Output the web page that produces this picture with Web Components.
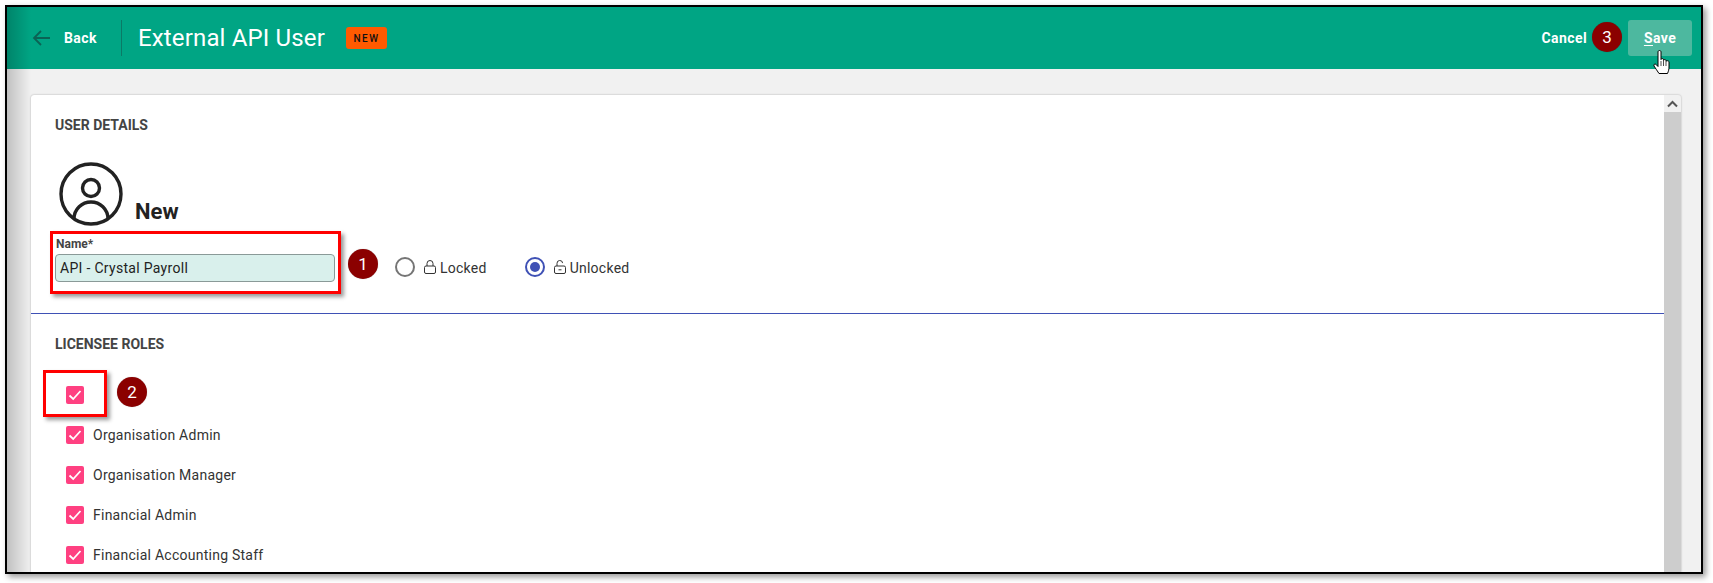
<!DOCTYPE html>
<html lang="en">
<head>
<meta charset="utf-8">
<title>External API User</title>
<style>
html, body { margin: 0; background: #fff; height: 100%; overflow: hidden; }
body { padding: 5px 10px 0 5px; box-sizing: border-box; font-family: Roboto, sans-serif; }
</style>
</head>
<body>
<api-user-page></api-user-page>

<script>
class StepBadge extends HTMLElement {
  constructor() {
    super();
    this.attachShadow({ mode: 'open' }).innerHTML = `
<style>
:host {
  position: absolute;
  width: 30px;
  height: 30px;
  border-radius: 50%;
  background: #8b0000;
  color: #fff;
  font: 400 17px Roboto, sans-serif;
  display: grid;
  place-items: center;
  box-shadow: 0 0 1px #0005;
}
</style><slot></slot>`;
  }
}
customElements.define('step-badge', StepBadge);

class MarkBox extends HTMLElement {
  constructor() {
    super();
    this.attachShadow({ mode: 'open' }).innerHTML = `
<style>
:host {
  position: absolute;
  box-sizing: border-box;
  border: 3px solid #f00;
  box-shadow: 3px 3px 4px #0006;
  pointer-events: none;
}
</style>`;
  }
}
customElements.define('mark-box', MarkBox);

class HeaderBar extends HTMLElement {
  constructor() {
    super();
    this.attachShadow({ mode: 'open' }).innerHTML = `
<style>
:host {
  display: flex;
  align-items: center;
  height: 62px;
  flex: none;
  background: #00a584;
  color: #fff;
  padding-left: 25px;
  padding-right: 9px;
  box-sizing: border-box;
}
.back { display: flex; align-items: center; gap: 14px; font-weight: 700; font-size: 14px; letter-spacing: 0.4px; width: 89px; flex: none; }
svg { display: block; }
.sep { width: 1px; height: 36px; background: #0b7a66; margin-right: 16px; }
h1 { margin: 0; font-size: 24px; font-weight: 400; line-height: 1; letter-spacing: 0.15px; }
.tag {
  margin-left: 21px;
  width: 41px;
  height: 22px;
  border-radius: 3px;
  background: #ff5a00;
  color: #111;
  font-size: 10px;
  font-weight: 500;
  letter-spacing: 1.5px;
  display: grid;
  place-items: center;
}
.actions { margin-left: auto; display: flex; align-items: center; font-weight: 700; font-size: 14px; letter-spacing: 0.4px; }
.cancel { margin-right: 41px; }
.save {
  width: 64px;
  height: 36px;
  border-radius: 3px;
  background: #4db89f;
  display: grid;
  place-items: center;
}
u { text-underline-offset: 2px; }
</style>
<div class="back">
  <svg width="18" height="16" viewBox="0 0 18 16" fill="none" stroke="#0b6355" stroke-width="1.8">
    <path d="M18 8H2M9 1 2 8l7 7"/>
  </svg>
  <span>Back</span>
</div>
<div class="sep"></div>
<h1>External API User</h1>
<span class="tag">NEW</span>
<div class="actions">
  <span class="cancel">Cancel</span>
  <span class="save"><span><u>S</u>ave</span></span>
</div>`;
  }
}
customElements.define('header-bar', HeaderBar);

class RoleCheck extends HTMLElement {
  constructor() {
    super();
    this.attachShadow({ mode: 'open' }).innerHTML = `
<style>
:host {
  display: flex;
  align-items: center;
  gap: 9px;
  height: 18px;
  color: #333;
  font-size: 14px;
  letter-spacing: 0.25px;
}
.box {
  width: 18px;
  height: 18px;
  border-radius: 2px;
  background: #ff4081;
  flex: none;
}
svg { display: block; }
</style>
<span class="box">
  <svg width="18" height="18" viewBox="0 0 18 18" fill="none" stroke="#fff" stroke-width="1.8">
    <path d="M3.500 9.500 7.200 13l7.300-8"/>
  </svg>
</span>
<slot></slot>`;
  }
}
customElements.define('role-check', RoleCheck);

class LockRadio extends HTMLElement {
  constructor() {
    super();
    const on = this.hasAttribute('checked');
    const shackle = on ? 'M3 6V3.500a2.800 2.800 0 0 1 5.600-.4' : 'M3 6V3.500a3 3 0 0 1 6 0V6';
    this.attachShadow({ mode: 'open' }).innerHTML = `
<style>
:host { display: flex; align-items: center; color: #333; font-size: 14px; letter-spacing: 0.25px; }
.dot {
  width: 20px;
  height: 20px;
  box-sizing: border-box;
  border-radius: 50%;
  border: 2px solid ${on ? '#3f51b5' : '#757575'};
  display: grid;
  place-items: center;
  margin-right: 9px;
}
.dot i { width: 10px; height: 10px; border-radius: 50%; background: #3f51b5; display: ${on ? 'block' : 'none'}; }
svg { display: block; margin-right: 4px; }
.text { padding-top: 2px; }
</style>
<span class="dot"><i></i></span>
<svg width="12" height="14" viewBox="0 0 12 14" fill="none" stroke="#333" stroke-width="1">
  <path d="${shackle}"/>
  <rect x="0.5" y="6" width="11" height="7.500" rx="1.500"/>
  ${on ? '<path d="M4.500 9.800h3"/>' : ''}
</svg>
<span class="text"><slot></slot></span>`;
  }
}
customElements.define('lock-radio', LockRadio);

class DetailsCard extends HTMLElement {
  constructor() {
    super();
    this.attachShadow({ mode: 'open' }).innerHTML = `
<style>
:host {
  display: flex;
  flex: 1;
  min-height: 0;
  background: #fff;
  border-radius: 3px 3px 0 0;
  box-shadow: 0 0 2px #0005;
  margin: 26px 20px 0 24px;
  overflow: hidden;
}
.body { flex: 1; min-width: 0; }
.top { padding: 20px 24px 0; box-sizing: border-box; border-bottom: 1px solid #3f51b5; height: 219px; }
h2 { margin: 0; font-size: 14px; line-height: 20px; font-weight: 700; color: #444; }
.who { display: flex; align-items: flex-end; gap: 12px; margin: 27px 0 0 4px; height: 64px; }
.who span { font-size: 22px; font-weight: 700; color: #222; line-height: 27px; margin-bottom: 1px; }
.who svg { display: block; }
.name-row { display: flex; align-items: flex-start; margin-top: 11px; }
.field { width: 280px; margin-right: 60px; }
label { display: block; font-size: 12px; line-height: 14px; font-weight: 700; color: #444; margin: 0 0 3px 1px; }
.input {
  height: 28px;
  box-sizing: border-box;
  border: 1px solid #8a9a98;
  border-radius: 4px;
  background: #d9f0ec;
  color: #222;
  font-size: 14px;
  letter-spacing: 0.3px;
  line-height: 26px;
  padding-left: 4px;
}
.radios { display: flex; gap: 38px; margin-top: 20px; }
.roles { padding: 20px 24px 0 35px; }
.roles h2 { margin-left: -11px; }
.list { display: flex; flex-direction: column; gap: 22px; margin-top: 32px; }
.bar { width: 17px; flex: none; background: #cdcdcd; display: flex; flex-direction: column; }
.up { height: 17px; background: #f1f1f1; display: grid; place-items: center; }
.up svg { display: block; }
</style>
<div class="body">
  <div class="top">
    <h2>USER DETAILS</h2>
    <div class="who">
      <svg width="64" height="64" viewBox="0 0 64 64" fill="none" stroke="#222" stroke-width="3.400">
        <circle cx="32" cy="32" r="30"/>
        <circle cx="32" cy="26" r="8.500"/>
        <path d="M15 57c0-10 8-17 17-17s17 7 17 17"/>
      </svg>
      <span>New</span>
    </div>
    <div class="name-row">
      <div class="field">
        <label>Name*</label>
        <div class="input">API - Crystal Payroll</div>
      </div>
      <div class="radios">
        <lock-radio>Locked</lock-radio>
        <lock-radio checked>Unlocked</lock-radio>
      </div>
    </div>
  </div>
  <div class="roles">
    <h2>LICENSEE ROLES</h2>
    <div class="list">
      <role-check></role-check>
      <role-check>Organisation Admin</role-check>
      <role-check>Organisation Manager</role-check>
      <role-check>Financial Admin</role-check>
      <role-check>Financial Accounting Staff</role-check>
    </div>
  </div>
</div>
<div class="bar">
  <div class="up">
    <svg width="11" height="8" viewBox="0 0 11 8" fill="none" stroke="#555" stroke-width="2"><path d="M1 6.500 5.500 2 10 6.500"/></svg>
  </div>
</div>`;
  }
}
customElements.define('details-card', DetailsCard);

class ApiUserPage extends HTMLElement {
  constructor() {
    super();
    this.attachShadow({ mode: 'open' }).innerHTML = `
<style>
:host {
  display: flex;
  flex-direction: column;
  position: relative;
  width: 1698px;
  height: 569px;
  box-sizing: border-box;
  border: 2px solid #000;
  background: #f1f1f1;
  overflow: hidden;
  box-shadow: 3px 3px 6px #0006;
}
.shade {
  position: absolute;
  inset: 0 auto 0 0;
  width: 24px;
  background: linear-gradient(90deg, #0003, #0000);
  pointer-events: none;
}
.hand { position: absolute; left: 1646px; top: 43px; display: block; }
</style>
<header-bar></header-bar>
<details-card></details-card>
<div class="shade"></div>
<mark-box style="left:43px;top:224px;width:291px;height:63px"></mark-box>
<mark-box style="left:36px;top:363px;width:64px;height:47px"></mark-box>
<step-badge style="left:341px;top:242px">1</step-badge>
<step-badge style="left:110px;top:370px">2</step-badge>
<step-badge style="left:1585px;top:15px">3</step-badge>
<svg class="hand" width="18" height="24" viewBox="0 0 18 24">
  <path d="M5 2c0-2 3-2 3 0v7.500c0-1.200 2.500-1.200 2.500 0v1c0-1.200 2.500-1.200 2.500 0v1c0-1.200 3-1 3 .5v5c0 2.500-.5 4-1.500 6.500H6C4.500 21 2.500 18.500 1 16c-.8-1.500 1-2.800 2.300-1.300L5 16.500z" fill="#fff" stroke="#000" stroke-width="1"/>
  <path d="M8 11v5M10.500 11v5M13 12v4" stroke="#000" stroke-width=".7" fill="none"/>
</svg>`;
  }
}
customElements.define('api-user-page', ApiUserPage);
</script>
</body>
</html>
